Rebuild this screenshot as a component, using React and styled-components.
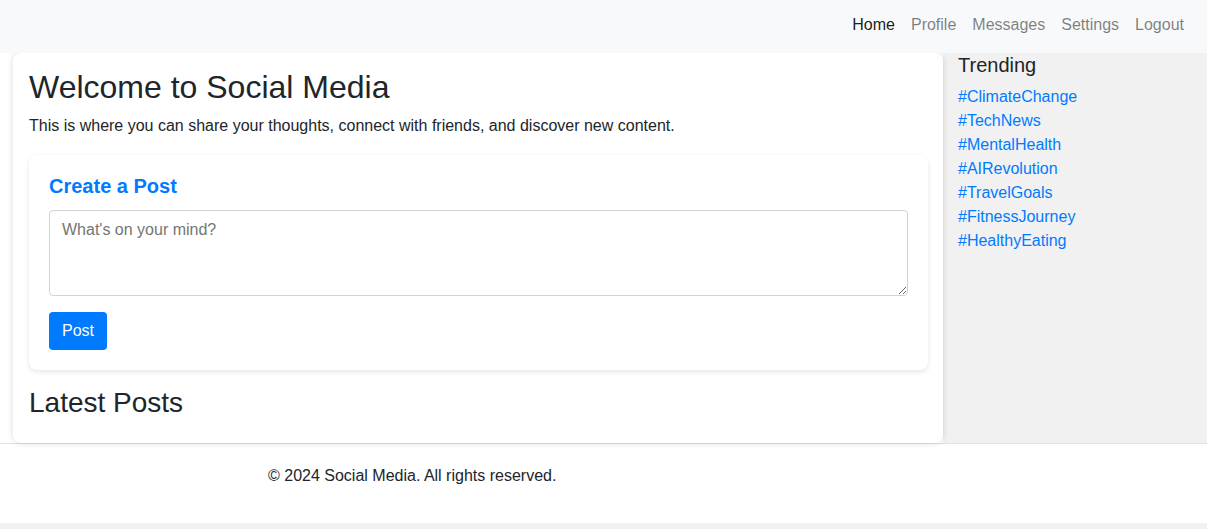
import React, { useState } from "react";
import styled, { createGlobalStyle } from "styled-components";

const GlobalStyle = createGlobalStyle`
  html, body {
    margin: 0;
    padding: 0;
    background: #f1f1f1;
    font-family: "Liberation Sans", Arial, sans-serif;
    color: #212529;
  }
  * {
    box-sizing: border-box;
  }
`;

const navLinks = ["Home", "Profile", "Messages", "Settings", "Logout"];

const trending = [
  "#ClimateChange",
  "#TechNews",
  "#MentalHealth",
  "#AIRevolution",
  "#TravelGoals",
  "#FitnessJourney",
  "#HealthyEating",
];

const App = () => {
  const [text, setText] = useState("");

  return (
    <>
      <GlobalStyle />
      <Navbar>
        <NavList>
          {navLinks.map((link, i) => (
            <NavLink key={link} href="#" $active={i === 0}>
              {link}
            </NavLink>
          ))}
        </NavList>
      </Navbar>
      <Layout>
        <Main>
          <Title>Welcome to Social Media</Title>
          <Intro>
            This is where you can share your thoughts, connect with friends,
            and discover new content.
          </Intro>
          <PostCard>
            <PostTitle>Create a Post</PostTitle>
            <TextArea
              placeholder="What's on your mind?"
              value={text}
              onChange={(e) => setText(e.target.value)}
            />
            <PostButton type="button">Post</PostButton>
          </PostCard>
          <SectionTitle>Latest Posts</SectionTitle>
        </Main>
        <Sidebar>
          <SidebarTitle>Trending</SidebarTitle>
          <TagList>
            {trending.map((tag) => (
              <li key={tag}>
                <Tag href="#">{tag}</Tag>
              </li>
            ))}
          </TagList>
        </Sidebar>
      </Layout>
      <Footer>© 2024 Social Media. All rights reserved.</Footer>
    </>
  );
};

const Navbar = styled.nav`
  height: 53px;
  background: #f8f9fa;
  display: flex;
  align-items: center;
  justify-content: flex-end;
  padding: 0 15px;
  position: relative;
  z-index: 2;
`;

const NavList = styled.div`
  display: flex;
  align-items: center;
  margin-top: -3px;
`;

const NavLink = styled.a`
  padding: 8px;
  font-size: 16px;
  line-height: 24px;
  text-decoration: none;
  color: ${(p) => (p.$active ? "rgba(0, 0, 0, 0.9)" : "rgba(0, 0, 0, 0.5)")};
`;

const Layout = styled.div`
  display: flex;
  background: #fff;
  padding-left: 13px;
`;

const Main = styled.main`
  flex: 1;
  background: #fff;
  border-radius: 8px;
  box-shadow: 0 0 6px rgba(0, 0, 0, 0.15);
  padding: 15px 15px 15px 16px;
  position: relative;
  z-index: 1;
`;

const Title = styled.h1`
  margin: 0 0 8px;
  font-size: 32px;
  font-weight: 400;
  line-height: 1.2;
`;

const Intro = styled.p`
  margin: 0 0 17px;
  font-size: 16px;
  line-height: 24px;
`;

const PostCard = styled.section`
  display: flex;
  flex-direction: column;
  align-items: flex-start;
  background: #fff;
  border-radius: 8px;
  box-shadow: 0 2px 5px rgba(0, 0, 0, 0.1);
  padding: 20px;
  margin-bottom: 16px;
`;

const PostTitle = styled.h3`
  margin: 0 0 12px;
  font-size: 20px;
  font-weight: 700;
  line-height: 23px;
  color: #007bff;
`;

const TextArea = styled.textarea`
  width: 100%;
  height: 86px;
  padding: 10px 12px;
  border: 1px solid #ced4da;
  border-radius: 4px;
  font-family: "Liberation Sans", Arial, sans-serif;
  font-size: 16px;
  line-height: 1.15;
  color: #212529;
  margin-bottom: 16px;
  resize: both;

  &::placeholder {
    color: #757575;
  }
`;

const PostButton = styled.button`
  background: #007bff;
  color: #fff;
  border: none;
  border-radius: 4px;
  padding: 10px 13px;
  font-family: "Liberation Sans", Arial, sans-serif;
  font-size: 16px;
  line-height: 18px;
  cursor: pointer;
`;

const SectionTitle = styled.h2`
  margin: 0 0 8px;
  font-size: 28px;
  font-weight: 400;
  line-height: 1.2;
`;

const Sidebar = styled.aside`
  width: 264px;
  flex-shrink: 0;
  background: #f1f1f1;
  padding: 1px 15px 0;
`;

const SidebarTitle = styled.h3`
  margin: 0 0 8px;
  font-size: 20px;
  font-weight: 400;
  line-height: 23px;
`;

const TagList = styled.ul`
  list-style: none;
  margin: 0;
  padding: 0;

  li {
    line-height: 24px;
    font-size: 16px;
  }
`;

const Tag = styled.a`
  color: #007bff;
  text-decoration: none;
`;

const Footer = styled.footer`
  height: 80px;
  background: #fff;
  border-top: 1px solid #dee2e6;
  padding: 20px 0 0 268px;
  font-size: 16px;
  line-height: 24px;
  margin-bottom: 6px;
`;

export default App;
